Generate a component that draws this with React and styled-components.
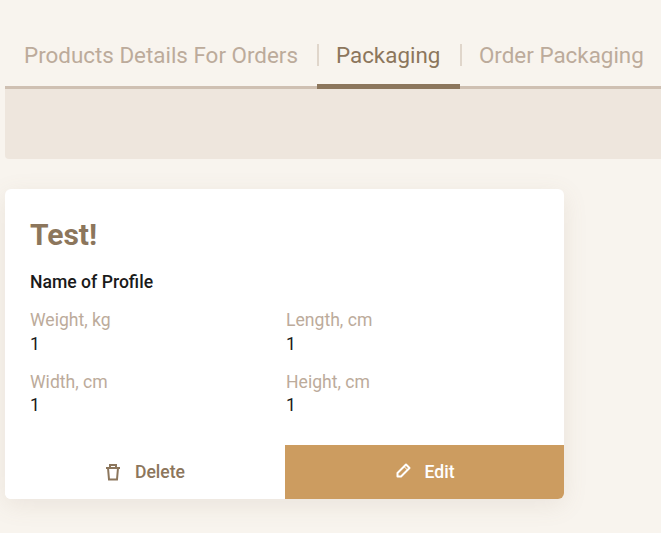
import React from 'react';
import styled, { createGlobalStyle, css } from 'styled-components';

const colors = {
  page: '#f8f4ee',
  band: '#eee6dd',
  line: '#cfc0b2',
  divider: '#e0d6cb',
  tabMuted: '#bcab9b',
  brown: '#8c765c',
  gold: '#cc9c60',
  dark: '#1a1a1a',
};

const GlobalStyle = createGlobalStyle`
  html, body {
    margin: 0;
    padding: 0;
    background: ${colors.page};
    font-family: Roboto, "Liberation Sans", sans-serif;
  }
`;

const Page = styled.div`
  height: 533px;
  overflow: hidden;
  padding: 30px 0 0 5px;
  box-sizing: border-box;
`;

const Tabs = styled.div`
  display: flex;
  height: 59px;
  width: 656px;
  border-bottom: 3px solid ${colors.line};
  box-sizing: border-box;
`;

const Tab = styled.div`
  position: relative;
  flex-shrink: 0;
  height: 59px;
  padding: 0 19px;
  font-size: 22.4px;
  line-height: 50px;
  white-space: nowrap;
  color: ${(p) => (p.$active ? colors.brown : colors.tabMuted)};
  border-bottom: 5px solid ${(p) => (p.$active ? colors.brown : 'transparent')};
  box-sizing: border-box;
  ${(p) => p.$active && css`min-width: 143px;`}

  ${(p) =>
    p.$divided &&
    css`
      &::before {
        content: '';
        position: absolute;
        left: 0;
        top: 14px;
        width: 2px;
        height: 22px;
        background: ${colors.divider};
      }
    `}
`;

const Band = styled.div`
  height: 70px;
  width: 656px;
  background: ${colors.band};
  border-radius: 0 0 0 4px;
`;

const Card = styled.div`
  width: 559px;
  margin-top: 30px;
  background: #fff;
  border-radius: 6px;
  box-shadow: 0 6px 24px rgba(140, 118, 92, 0.12);
  overflow: hidden;
`;

const CardBody = styled.div`
  padding: 28px 25px 0;
  height: 256px;
  box-sizing: border-box;
`;

const Title = styled.h2`
  margin: 0;
  font-size: 30px;
  line-height: 36px;
  font-weight: 700;
  color: ${colors.brown};
`;

const ProfileName = styled.div`
  margin-top: 18px;
  font-size: 17.6px;
  line-height: 22px;
  font-weight: 500;
  color: ${colors.dark};
`;

const Specs = styled.div`
  display: grid;
  grid-template-columns: 256px 1fr;
  row-gap: 14px;
  margin-top: 16px;
`;

const Spec = styled.div`
  display: flex;
  flex-direction: column;
`;

const SpecLabel = styled.span`
  font-size: 17.6px;
  line-height: 23.76px;
  color: ${colors.tabMuted};
`;

const SpecValue = styled.span`
  font-size: 17.6px;
  line-height: 23.76px;
  color: ${colors.dark};
`;

const Actions = styled.div`
  display: grid;
  grid-template-columns: 280px 279px;
  height: 54px;
`;

const ActionButton = styled.button`
  display: flex;
  align-items: center;
  justify-content: center;
  gap: ${(p) => (p.$primary ? '12px' : '14px')};
  border: 0;
  padding: 0 0 1px;
  font-family: inherit;
  font-size: 17.6px;
  font-weight: 500;
  background: ${(p) => (p.$primary ? colors.gold : '#fff')};
  color: ${(p) => (p.$primary ? '#fff' : colors.brown)};
`;

const TrashIcon = () => (
  <svg width="16" height="18" viewBox="0 0 16 18" fill="none" stroke="currentColor" strokeWidth="2">
    <path d="M1 5h14" />
    <path d="M5 5V2h6v3" />
    <path d="M3 5l1 11.5h8L13 5" />
  </svg>
);

const EditIcon = () => (
  <svg width="18" height="18" viewBox="0 0 18 18" fill="none" stroke="currentColor" strokeWidth="2" strokeLinejoin="round">
    <path d="M3.5 13.5V10L12 1.5 15.5 5 7 13.5z" />
    <path d="M10 3.5l3.5 3.5" strokeWidth="1" />
  </svg>
);

const specs = [
  ['Weight, kg', '1'],
  ['Length, cm', '1'],
  ['Width, cm', '1'],
  ['Height, cm', '1'],
];

export default function App() {
  return (
    <>
      <GlobalStyle />
      <Page>
        <Tabs>
          <Tab>Products Details For Orders</Tab>
          <Tab $active $divided>Packaging</Tab>
          <Tab $divided>Order Packaging</Tab>
        </Tabs>
        <Band />
        <Card>
          <CardBody>
            <Title>Test!</Title>
            <ProfileName>Name of Profile</ProfileName>
            <Specs>
              {specs.map(([label, value]) => (
                <Spec key={label}>
                  <SpecLabel>{label}</SpecLabel>
                  <SpecValue>{value}</SpecValue>
                </Spec>
              ))}
            </Specs>
          </CardBody>
          <Actions>
            <ActionButton>
              <TrashIcon />
              Delete
            </ActionButton>
            <ActionButton $primary>
              <EditIcon />
              Edit
            </ActionButton>
          </Actions>
        </Card>
      </Page>
    </>
  );
}
